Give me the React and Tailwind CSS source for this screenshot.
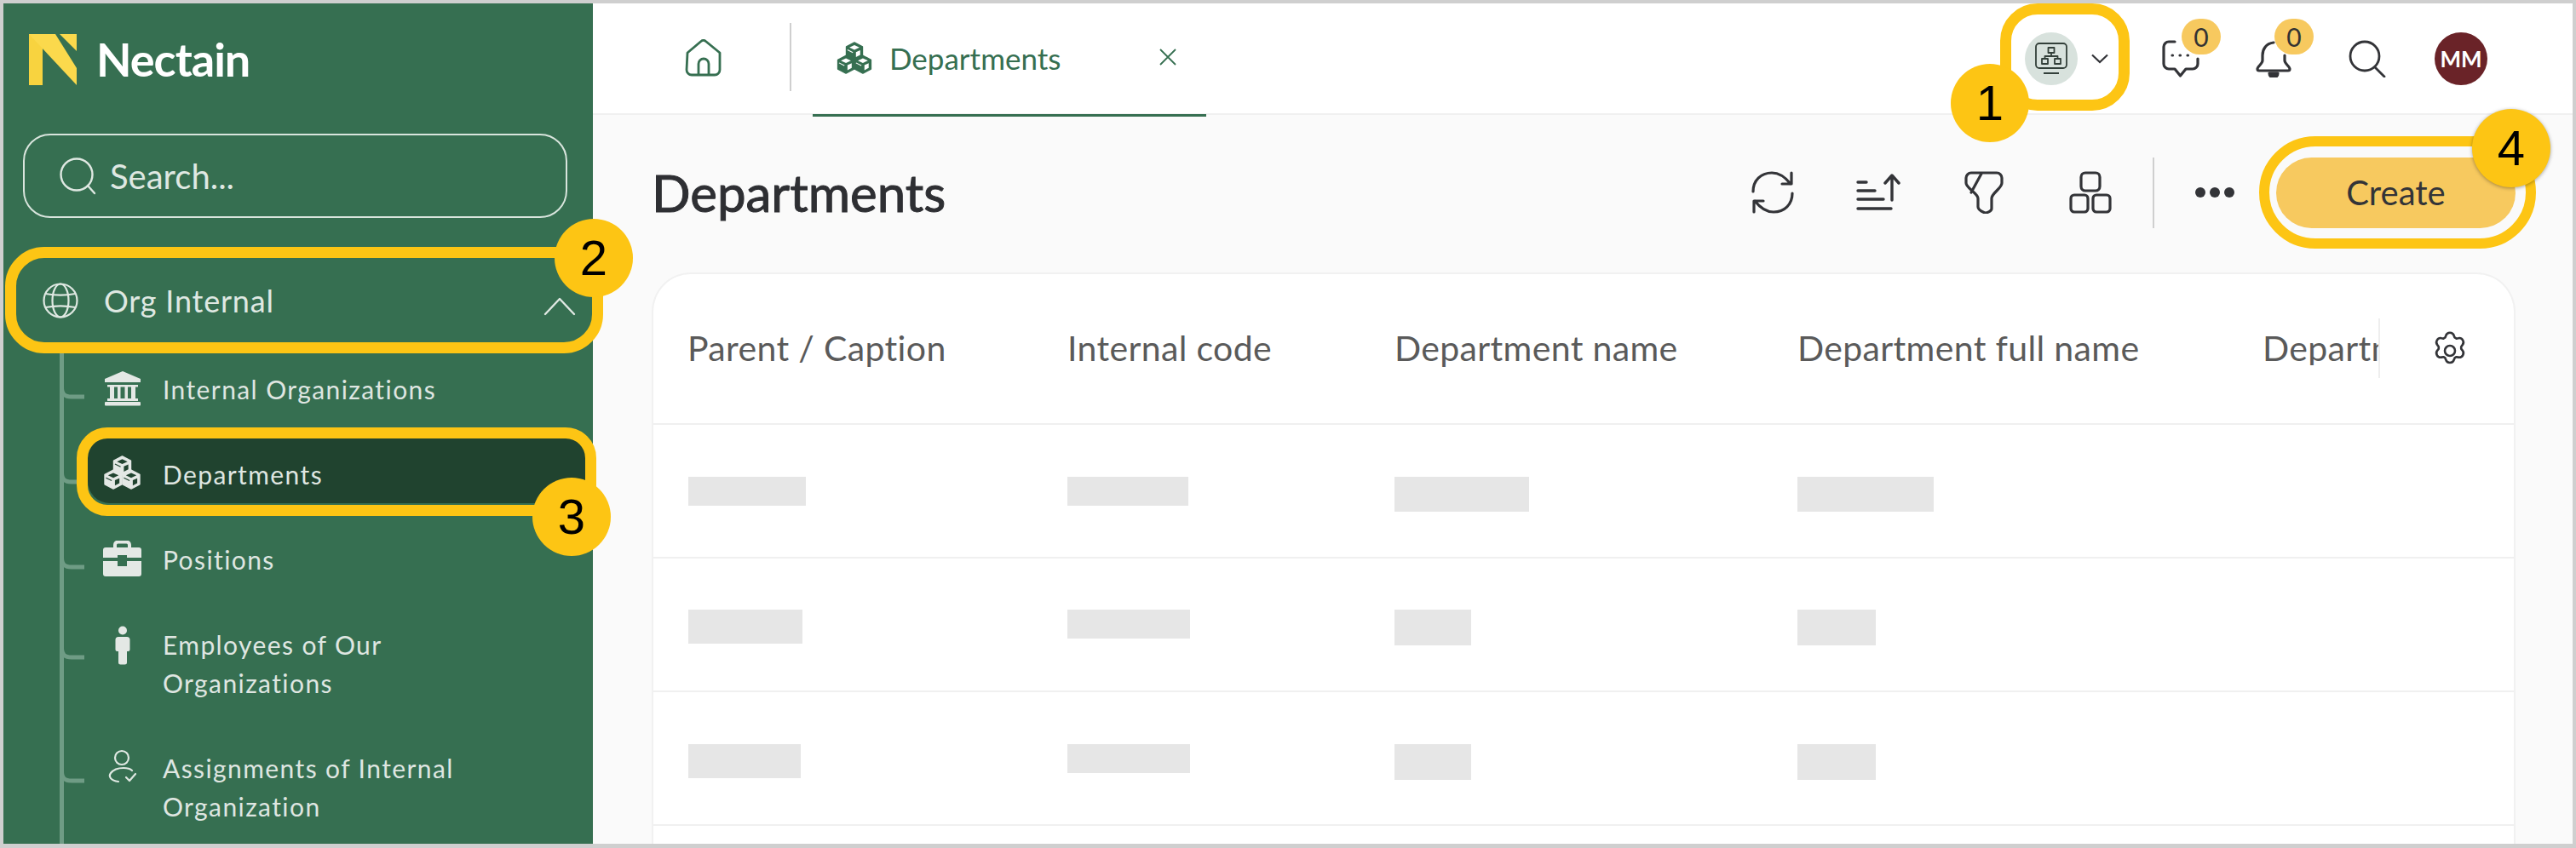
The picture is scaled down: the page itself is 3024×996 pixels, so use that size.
import React from "react";

function Cubes({ w = 45, h = 40, c = "#e4e8e5", hole = "#20432f" }) {
  const cube = (x, y, k) => (
    <g key={k} transform={`translate(${x} ${y})`}>
      <path d="M0 -11.5 L10.5 -6 V6 L0 11.5 L-10.5 6 V-6 Z" fill={c} stroke={c} strokeWidth="1.5" strokeLinejoin="round" />
      <path d="M0 -8 L6.5 -5 L0 -2 L-6.5 -5 Z" fill={hole} />
      <path d="M2 1 L7.5 -1.5 V4.5 L2 7.5 Z" fill={hole} />
      <path d="M-9 -2 L-2 1.5" stroke={hole} strokeWidth="1.2" />
    </g>
  );
  return (
    <svg width={w} height={h} viewBox="0 0 46 42" className="shrink-0">
      {cube(23, 12.5, "a")}
      {cube(12, 29.5, "b")}
      {cube(34, 29.5, "c")}
    </svg>
  );
}

function Bank() {
  return (
    <svg width="44" height="42" viewBox="0 0 44 42" fill="#e4e8e5" className="shrink-0">
      <path d="M22 1 L43 10 V14 H1 V10 Z" />
      <rect x="4" y="17" width="36" height="2.5" />
      <rect x="7" y="19" width="5" height="14" />
      <rect x="16" y="19" width="3.5" height="14" />
      <rect x="24.5" y="19" width="3.5" height="14" />
      <rect x="32" y="19" width="5" height="14" />
      <rect x="4" y="33" width="36" height="3" />
      <rect x="1" y="37" width="42" height="4.5" rx="1" />
    </svg>
  );
}

function Briefcase() {
  return (
    <svg width="45" height="42" viewBox="0 0 45 42" className="shrink-0">
      <path d="M14 10 V5 a3.5 3.5 0 0 1 3.5 -3.5 h10 a3.5 3.5 0 0 1 3.5 3.5 V10" fill="none" stroke="#e4e8e5" strokeWidth="4" />
      <path d="M3 8 H42 a3 3 0 0 1 3 3 V20 H28 V17 H17 V20 H0 V11 a3 3 0 0 1 3 -3 Z" fill="#e4e8e5" />
      <path d="M0 24 H17 V30 H28 V24 H45 V39 a3 3 0 0 1 -3 3 H3 a3 3 0 0 1 -3 -3 Z" fill="#e4e8e5" />
    </svg>
  );
}

function Person() {
  return (
    <svg width="20" height="46" viewBox="0 0 20 46" fill="#e4e8e5" className="shrink-0">
      <circle cx="10" cy="5.5" r="5" />
      <path d="M5 13 H15 a3.5 3.5 0 0 1 3.5 3.5 V28 a2 2 0 0 1 -2 2 H15 V43 a2.5 2.5 0 0 1 -2.5 2.5 H7.5 A2.5 2.5 0 0 1 5 43 V30 H3.5 a2 2 0 0 1 -2 -2 V16.5 A3.5 3.5 0 0 1 5 13 Z" />
    </svg>
  );
}

function UserCheck() {
  return (
    <svg width="34" height="40" viewBox="0 0 34 40" fill="none" stroke="#dfe8e2" strokeWidth="2.2" strokeLinecap="round" strokeLinejoin="round" className="shrink-0">
      <circle cx="16" cy="10" r="8" />
      <path d="M12 38 C3 37 0 32 3 28 C6 24 12 22 18 22 C23 22 26 23 28 25" />
      <path d="M21 33 L25 37 L32 29" />
    </svg>
  );
}

function NavItem({ icon, lines, className = "" }) {
  return (
    <div className={`relative flex items-start ${className}`}>
      <div className="w-[45px] shrink-0 flex justify-center">{icon}</div>
      <div className="ml-[25px] text-[30px] leading-[45px] tracking-[1.4px] text-[#dfe6e1]">
        {lines.map((l) => (
          <div key={l}>{l}</div>
        ))}
      </div>
    </div>
  );
}

function Badge({ n, className }) {
  return (
    <div className={`absolute w-[92px] h-[92px] rounded-full bg-[#fdc514] flex items-center justify-center text-black text-[58px] leading-none font-['Liberation_Sans',sans-serif] ${className}`}>
      {n}
    </div>
  );
}

function Count({ className }) {
  return (
    <div className={`absolute w-[46px] h-[42px] rounded-full bg-[#f7c95f] flex items-center justify-center text-[#333] text-[30px] leading-none ${className}`}>
      0
    </div>
  );
}

function Skel({ w, h }) {
  return <div className="bg-[#e6e6e6]" style={{ width: w, height: h }}></div>;
}

function Tick({ top }) {
  return (
    <svg width="34" height="16" viewBox="0 0 34 16" fill="none" stroke="#6f9c85" strokeWidth="5" className="absolute -left-[51px]" style={{ top }}>
      <path d="M2.500 0 C2.500 8 6 11 14 11 H29" />
    </svg>
  );
}

const ic = { fill: "none", stroke: "#333438", strokeWidth: 3.2, strokeLinecap: "round", strokeLinejoin: "round" };

const rows = [
  { pt: "pt-[61px]", cells: [[138, 34], [142, 34], [158, 41], [160, 41]] },
  { pt: "pt-[60px]", cells: [[134, 40], [144, 34], [90, 42], [92, 42]] },
  { pt: "pt-[61px]", cells: [[132, 40], [144, 34], [90, 42], [92, 42]] },
];

export default function App() {
  return (
    <div className="relative w-[3024px] h-[996px] overflow-hidden bg-[#cfcfcf] pt-[4px] pl-[4px] pr-[4px] pb-[5px] font-['Lato',sans-serif]">
      <div className="flex h-full bg-[#fafafa]">
        {/* Sidebar */}
        <aside className="relative w-[692px] shrink-0 bg-[#366f51] overflow-hidden flex flex-col">
          <div className="flex items-center h-[60px] mt-[36px] ml-[30px] shrink-0">
            <svg width="56" height="60" viewBox="0 0 56 60" className="shrink-0">
              <path d="M0 0 H16 V60 H0 Z" fill="#f8d33f" />
              <path d="M0 0 H31 L56 40 V60 Z" fill="#fbd94c" />
              <path d="M36 0 H56 V20 Z" fill="#fbd94c" />
            </svg>
            <span className="ml-[23px] text-white font-bold text-[54px] leading-none tracking-[-1px]">Nectain</span>
          </div>
          <div className="mx-[23px] w-[639px] mt-[57px] h-[99px] shrink-0 rounded-[32px] border-2 border-[#d9e5dd] flex items-center pl-[41px]">
            <svg width="44" height="44" viewBox="0 0 44 44" fill="none" stroke="#dfe8e2" strokeWidth="2.4" strokeLinecap="round">
              <circle cx="20" cy="20" r="18.5" />
              <path d="M33 33 L41 42" />
            </svg>
            <span className="ml-[15px] text-[40px] leading-none text-[#dfe8e2]">Search...</span>
          </div>
          <div className="relative flex items-center h-[106px] mt-[44px] pl-[46px] shrink-0">
            <svg width="42" height="42" viewBox="0 0 42 42" fill="none" stroke="#dfe8e2" strokeWidth="2.2" className="shrink-0">
              <circle cx="21" cy="21" r="19.5" />
              <ellipse cx="21" cy="21" rx="9.5" ry="19.5" />
              <path d="M3.5 13 C14 15 28 15 38.5 13 M3.5 29 C14 27 28 27 38.5 29" />
            </svg>
            <span className="ml-[30px] text-[36px] leading-none tracking-[0.8px] text-[#dfe8e2]">Org Internal</span>
            <svg width="38" height="22" viewBox="0 0 38 22" fill="none" stroke="#dfe8e2" strokeWidth="2.4" strokeLinecap="round" strokeLinejoin="round" className="absolute left-[634px] top-[49px]">
              <path d="M2 20 L19 2 L36 20" />
            </svg>
          </div>
          {/* tree */}
          <div className="relative flex-1 min-h-0 pl-[117px] pt-[29px]">
            <div className="absolute left-[66px] top-0 bottom-0 w-[5px] bg-[#6f9c85]"></div>
            <div className="relative">
              <Tick top={20} />
              <NavItem icon={<Bank />} lines={["Internal Organizations"]} className="h-[58px]" />
            </div>
            <div className="relative mt-[42px]">
              <div className="absolute -left-[18px] top-[-22px] w-[585px] h-[78px] rounded-[26px] bg-[#20432f]"></div>
              <Tick top={20} />
              <NavItem icon={<Cubes />} lines={["Departments"]} className="h-[58px]" />
            </div>
            <div className="relative mt-[42px]">
              <Tick top={20} />
              <NavItem icon={<Briefcase />} lines={["Positions"]} className="h-[58px]" />
            </div>
            <div className="relative mt-[42px]">
              <Tick top={26} />
              <NavItem icon={<Person />} lines={["Employees of Our", "Organizations"]} className="h-[104px]" />
            </div>
            <div className="relative mt-[41px]">
              <Tick top={26} />
              <NavItem icon={<UserCheck />} lines={["Assignments of Internal", "Organization"]} />
            </div>
          </div>
        </aside>

        {/* Main */}
        <main className="flex-1 min-w-0 flex flex-col">
          <header className="relative h-[131px] shrink-0 bg-white border-b-[2px] border-[#f0f0f0] flex items-stretch">
            <div className="w-[231px] flex items-center pb-[2px]">
              <svg width="44" height="44" viewBox="0 0 44 44" fill="none" stroke="#366f51" strokeWidth="2.8" strokeLinejoin="round" className="ml-[108px]">
                <path d="M3 16 L19 2.5 a4 4 0 0 1 5.500 0 L41 16 V36 a6 6 0 0 1 -6 6 H8 a6 6 0 0 1 -6 -6 Z" />
                <path d="M16 42 V29 a6 6 0 0 1 12 0 V42" />
              </svg>
            </div>
            <div className="w-[2px] h-[80px] mt-[23px] bg-[#cfcfcf]"></div>
            <div className="relative ml-[25px] w-[462px] h-[131px] flex items-center pb-[3px]">
              <div className="ml-[28px]">
                <Cubes w={42} h={38} c="#366f51" hole="#ffffff" />
              </div>
              <span className="ml-[20px] text-[35px] leading-none text-[#366f51]">Departments</span>
              <svg width="20" height="20" viewBox="0 0 20 20" stroke="#366f51" strokeWidth="1.8" className="absolute left-[407px] top-[53px]">
                <path d="M1 1 L19 19 M19 1 L1 19" />
              </svg>
              <div className="absolute left-0 right-0 -bottom-[2px] h-[3px] bg-[#366f51]"></div>
            </div>
            <div className="flex-1 relative flex items-center justify-end">
              <div className="w-[62px] h-[62px] rounded-full bg-[#d8e2dd] flex items-center justify-center">
                <svg width="40" height="40" viewBox="0 0 40 40" fill="none" stroke="#33403a" strokeWidth="1.8" strokeLinejoin="round">
                  <rect x="2" y="2" width="36" height="29" rx="4" />
                  <rect x="16.500" y="7" width="7" height="6" />
                  <rect x="9" y="20" width="7" height="6" />
                  <rect x="24" y="20" width="7" height="6" />
                  <path d="M20 13 V17 H12.500 V20 M20 17 H27.500 V20 M11 37 H29" />
                </svg>
              </div>
              <svg width="20" height="12" viewBox="0 0 20 12" fill="none" stroke="#333438" strokeWidth="2.2" className="ml-[16px]">
                <path d="M1 1.500 L10 10 L19 1.500" />
              </svg>
              <div className="relative ml-[63px]">
                <svg width="44" height="44" viewBox="0 0 44 44" {...ic} className="block">
                  <path d="M15 2 H8 a6 6 0 0 0 -6 6 V28 a6 6 0 0 0 6 6 H15 L21.500 42 L28 34 H36 a6 6 0 0 0 6 -6 V22" />
                  <path d="M12 18 H12.500 M21 18 H21.500 M30 18 H30.500" />
                </svg>
                <Count className="left-[23px] -top-[25px]" />
              </div>
              <div className="relative ml-[66px]">
                <svg width="42" height="44" viewBox="0 0 42 44" {...ic} className="block">
                  <path d="M21 3 C12 4 8 11 8 18 V24 C8 28 2 31 2 34 a2 2 0 0 0 2 2 H38 a2 2 0 0 0 2 -2 C40 31 34 28 34 24 V18" />
                  <path d="M16 39 a5 5 0 0 0 10 0 Z" fill="#333438" />
                </svg>
                <Count className="left-[22px] -top-[25px]" />
              </div>
              <svg width="44" height="44" viewBox="0 0 44 44" {...ic} strokeWidth="2.8" className="ml-[67px]">
                <circle cx="19" cy="19" r="17" />
                <path d="M31 32 L42 43" />
              </svg>
              <div className="ml-[57px] mr-[100px] w-[62px] h-[62px] rounded-full bg-[#6a2328] flex items-center justify-center text-white font-bold text-[26px] leading-none">MM</div>
            </div>
          </header>

          <div className="flex items-center justify-between h-[136px] mt-[23px] pl-[69px] pr-[67px] shrink-0">
            <h1 className="text-[60px] leading-none font-normal text-[#2e2f33] [-webkit-text-stroke:1px_#2e2f33]">Departments</h1>
            <div className="flex items-center">
              <svg width="50" height="50" viewBox="0 0 50 50" {...ic}>
                <path d="M2 24 C2 11 11 2 24 2 C32 2 39 6 46 15 M47 2 V15 H36" />
                <path d="M48 26 C48 39 39 48 26 48 C18 48 11 44 4 35 M3 48 V35 H14" />
              </svg>
              <svg width="52" height="44" viewBox="0 0 52 44" {...ic} strokeWidth="3.4" className="ml-[73px]">
                <path d="M2 10 H12 M2 20 H22 M2 30 H32 M2 41 H41 M42 31 V3 M34 11 L42 2 L50 11" />
              </svg>
              <svg width="46" height="50" viewBox="0 0 46 50" {...ic} className="ml-[75px]">
                <path d="M8 2 H38 a6 6 0 0 1 6 6 V14 C44 20 32 26 32 32 V44 C32 47 27 49 24 49 C19 47 16 45 16 42 V32 C16 26 2 20 2 14 V8 a6 6 0 0 1 6 -6 Z" />
                <path d="M20 3 L8 25" />
              </svg>
              <svg width="50" height="50" viewBox="0 0 50 50" {...ic} className="ml-[77px]">
                <rect x="14" y="2" width="22" height="21" rx="5" />
                <rect x="2" y="28" width="20" height="20" rx="4" />
                <rect x="28" y="28" width="20" height="20" rx="4" />
              </svg>
              <div className="ml-[48px] w-[2px] h-[83px] bg-[#cfcfcf]"></div>
              <div className="ml-[48px] flex gap-[5px]">
                <span className="w-[12px] h-[12px] rounded-full bg-[#333438]"></span>
                <span className="w-[12px] h-[12px] rounded-full bg-[#333438]"></span>
                <span className="w-[12px] h-[12px] rounded-full bg-[#333438]"></span>
              </div>
              <button className="ml-[49px] w-[281px] h-[83px] rounded-[42px] bg-[#f7c95f] text-[#333438] text-[40px] leading-none">Create</button>
            </div>
          </div>

          <section className="flex-1 ml-[69px] mr-[67px] mt-[26px] min-h-0 rounded-t-[46px] bg-white border-2 border-b-0 border-[#f1f1f1] overflow-hidden">
            <div className="relative h-[177px] flex items-center pb-[2px] border-b-2 border-[#f0f0f0] text-[41px] leading-none text-[#5a5a5a] tracking-[0.35px]">
              <div className="w-[486px] pl-[40px] shrink-0">Parent / Caption</div>
              <div className="w-[384px] shrink-0">Internal code</div>
              <div className="w-[473px] shrink-0">Department name</div>
              <div className="w-[546px] shrink-0">Department full name</div>
              <div className="w-[136px] shrink-0 overflow-hidden whitespace-nowrap">Department type</div>
              <div className="w-[2px] h-[70px] bg-[#eeeeee] shrink-0"></div>
              <svg width="48" height="48" viewBox="0 0 24 24" fill="none" stroke="#333438" strokeWidth="1.300" strokeLinejoin="round" className="ml-[58px] mt-[6px] shrink-0">
                <path d="M9.600 3.200 a2.500 2.500 0 0 1 4.800 0 l.4 1 1 .6 1.100 -.2 a2.500 2.500 0 0 1 2.400 4.100 l-.7 .9 v1.200 l.7 .9 a2.500 2.500 0 0 1 -2.400 4.100 l-1.100 -.2 -1 .6 -.4 1 a2.500 2.500 0 0 1 -4.800 0 l-.4 -1 -1 -.6 -1.100 .2 a2.500 2.500 0 0 1 -2.400 -4.100 l.7 -.9 v-1.200 l-.7 -.9 a2.500 2.500 0 0 1 2.400 -4.100 l1.100 .2 1 -.6 Z" />
                <circle cx="12" cy="12" r="3" />
              </svg>
            </div>
            {rows.map((r, i) => (
              <div key={i} className={`h-[157px] flex items-start border-b-2 border-[#f0f0f0] ${r.pt}`}>
                <div className="w-[486px] pl-[41px]">
                  <Skel w={r.cells[0][0]} h={r.cells[0][1]} />
                </div>
                <div className="w-[384px]">
                  <Skel w={r.cells[1][0]} h={r.cells[1][1]} />
                </div>
                <div className="w-[473px]">
                  <Skel w={r.cells[2][0]} h={r.cells[2][1]} />
                </div>
                <div>
                  <Skel w={r.cells[3][0]} h={r.cells[3][1]} />
                </div>
              </div>
            ))}
          </section>
        </main>
      </div>

      {/* Annotation overlays */}
      <div className="absolute left-[6px] top-[290px] w-[702px] h-[125px] rounded-[46px] border-[13px] border-[#fdc514]"></div>
      <div className="absolute left-[90px] top-[502px] w-[610px] h-[104px] rounded-[36px] border-[13px] border-[#fdc514]"></div>
      <div className="absolute left-[2348px] top-[4px] w-[152px] h-[126px] rounded-[44px] border-[13px] border-[#fdc514]"></div>
      <div className="absolute left-[2652px] top-[160px] w-[325px] h-[132px] rounded-[66px] border-[12px] border-[#fdc514]"></div>
      <Badge n="1" className="left-[2290px] top-[75px]" />
      <Badge n="2" className="left-[651px] top-[257px]" />
      <Badge n="3" className="left-[625px] top-[561px]" />
      <Badge n="4" className="left-[2902px] top-[128px] shadow-[0_1px_4px_rgba(0,0,0,0.35)]" />
    </div>
  );
}
